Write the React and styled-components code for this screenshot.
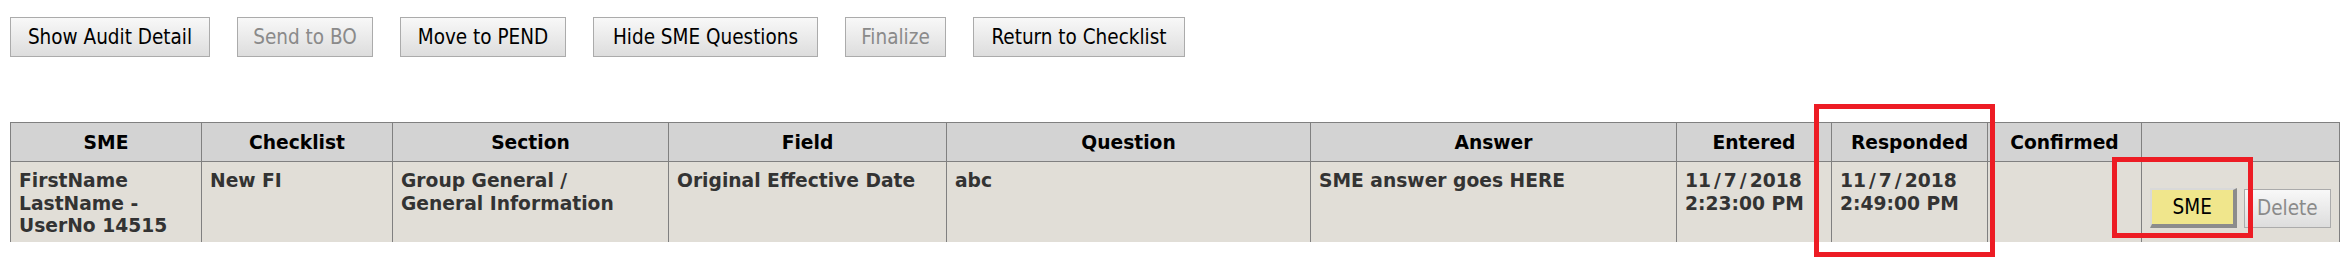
import React from "react";
import styled, { createGlobalStyle } from "styled-components";

const GlobalStyle = createGlobalStyle`
  body {
    margin: 0;
    background: #fff;
  }
`;

const Page = styled.div`
  position: relative;
  padding: 17px 0 0 10px;
  height: 271px;
  box-sizing: border-box;
`;

const Toolbar = styled.div`
  display: flex;
  gap: 27px;
  align-items: center;
`;

const ActionButton = styled.button`
  height: 40px;
  width: ${(p) => p.$w}px;
  padding: 0;
  border: 1px solid #ababab;
  border-radius: 0;
  background: linear-gradient(#f8f8f8, #dddddd);
  color: ${(p) => (p.disabled ? "#8a8a8a" : "#000")};
  font-family: "DejaVu Sans Condensed", "DejaVu Sans", sans-serif;
  font-size: 20.5px;
  cursor: ${(p) => (p.disabled ? "default" : "pointer")};
`;

const Grid = styled.table`
  margin-top: 65px;
  width: 2329px;
  border-collapse: collapse;
  table-layout: fixed;
  font-family: "DejaVu Sans", Verdana, sans-serif;
  font-weight: bold;
  font-size: 18.7px;
`;

const HeadCell = styled.th`
  height: 38px;
  padding: 0 8px;
  background: #d3d3d3;
  color: #000;
  border: 1px solid #808080;
  text-align: center;
  vertical-align: middle;
  font-weight: bold;
`;

const BodyCell = styled.td`
  height: 72px;
  padding: 8px 8px 0 8px;
  background: #e1ded7;
  color: #333;
  line-height: 22.5px;
  border: 1px solid #808080;
  border-bottom: none;
  vertical-align: ${(p) => (p.$middle ? "middle" : "top")};
  text-align: ${(p) => (p.$middle ? "center" : "left")};
`;

// verdana draws a much wider slash than dejavu
const Slash = styled.span`
  margin: 0 3px;
`;

const RowActions = styled.div`
  display: flex;
  justify-content: center;
  align-items: center;
  gap: 7px;
  padding-top: 4px;
`;

const SmeButton = styled.button`
  width: 87px;
  height: 40px;
  padding: 0;
  background: #f0e68c;
  border-style: solid;
  border-width: 2px 4px 4px 2px;
  border-color: #d9d9d9 #8c8c8c #8c8c8c #d9d9d9;
  border-radius: 0;
  color: #000;
  font-family: "DejaVu Sans Condensed", "DejaVu Sans", sans-serif;
  font-size: 20.5px;
`;

const DeleteButton = styled.button`
  width: 88px;
  height: 39px;
  padding: 0;
  border: 1px solid #ababab;
  border-radius: 0;
  background: linear-gradient(#f8f8f8, #dddddd);
  color: #8a8a8a;
  font-family: "DejaVu Sans Condensed", "DejaVu Sans", sans-serif;
  font-size: 20.5px;
`;

const Highlight = styled.div`
  position: absolute;
  left: ${(p) => p.$x}px;
  top: ${(p) => p.$y}px;
  width: ${(p) => p.$w}px;
  height: ${(p) => p.$h}px;
  border: 5px solid #ed1c24;
  box-sizing: border-box;
  pointer-events: none;
`;

const actions = [
  { label: "Show Audit Detail", w: 200 },
  { label: "Send to BO", w: 136, disabled: true },
  { label: "Move to PEND", w: 166 },
  { label: "Hide SME Questions", w: 225 },
  { label: "Finalize", w: 101, disabled: true },
  { label: "Return to Checklist", w: 212 },
];

const columns = [
  { title: "SME", w: 191 },
  { title: "Checklist", w: 191 },
  { title: "Section", w: 276 },
  { title: "Field", w: 278 },
  { title: "Question", w: 364 },
  { title: "Answer", w: 366 },
  { title: "Entered", w: 155 },
  { title: "Responded", w: 156 },
  { title: "Confirmed", w: 154 },
  { title: "", w: 198 },
];

const row = {
  sme: ["FirstName", "LastName -", "UserNo 14515"],
  checklist: ["New FI"],
  section: ["Group General /", "General Information"],
  field: ["Original Effective Date"],
  question: ["abc"],
  answer: ["SME answer goes HERE"],
  entered: ["11/7/2018", "2:23:00 PM"],
  responded: ["11/7/2018", "2:49:00 PM"],
  confirmed: [],
};

function DateText({ value }) {
  const parts = value.split("/");
  return parts.map((p, i) => (
    <React.Fragment key={i}>
      {i > 0 && <Slash>/</Slash>}
      {p}
    </React.Fragment>
  ));
}

function Lines({ items, date }) {
  return items.map((t, i) => (
    <React.Fragment key={i}>
      {i > 0 && <br />}
      {date ? <DateText value={t} /> : t}
    </React.Fragment>
  ));
}

export default function App() {
  return (
    <>
      <GlobalStyle />
      <Page>
        <Toolbar>
          {actions.map((a) => (
            <ActionButton key={a.label} $w={a.w} disabled={a.disabled}>
              {a.label}
            </ActionButton>
          ))}
        </Toolbar>
        <Grid>
          <colgroup>
            {columns.map((c, i) => (
              <col key={i} style={{ width: c.w }} />
            ))}
          </colgroup>
          <thead>
            <tr>
              {columns.map((c, i) => (
                <HeadCell key={i}>{c.title}</HeadCell>
              ))}
            </tr>
          </thead>
          <tbody>
            <tr>
              <BodyCell><Lines items={row.sme} /></BodyCell>
              <BodyCell><Lines items={row.checklist} /></BodyCell>
              <BodyCell><Lines items={row.section} /></BodyCell>
              <BodyCell><Lines items={row.field} /></BodyCell>
              <BodyCell><Lines items={row.question} /></BodyCell>
              <BodyCell><Lines items={row.answer} /></BodyCell>
              <BodyCell><Lines items={row.entered} date /></BodyCell>
              <BodyCell><Lines items={row.responded} date /></BodyCell>
              <BodyCell><Lines items={row.confirmed} /></BodyCell>
              <BodyCell $middle>
                <RowActions>
                  <SmeButton>SME</SmeButton>
                  <DeleteButton disabled>Delete</DeleteButton>
                </RowActions>
              </BodyCell>
            </tr>
          </tbody>
        </Grid>
        <Highlight $x={1814} $y={104} $w={181} $h={153} />
        <Highlight $x={2112} $y={157} $w={141} $h={81} />
      </Page>
    </>
  );
}
